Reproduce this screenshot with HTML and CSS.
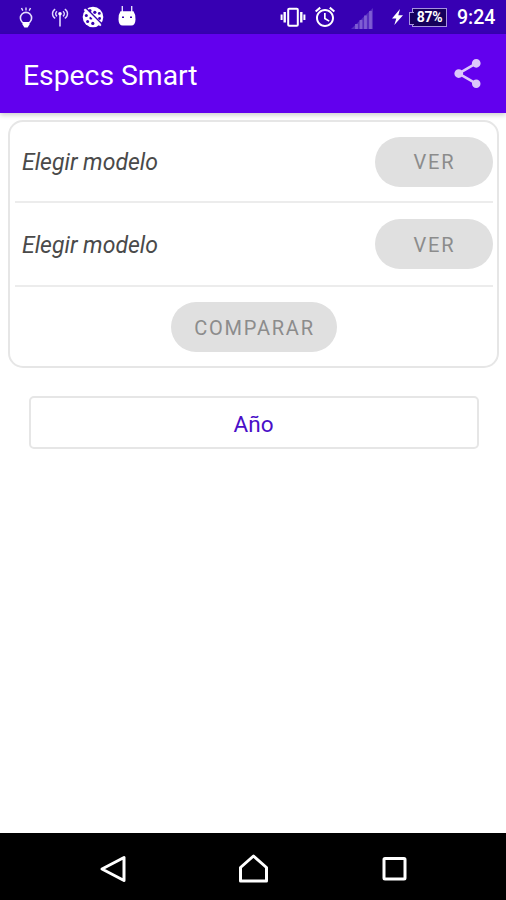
FILE: index.html
```html
<!DOCTYPE html>
<html lang="es">
<head>
    <meta charset="UTF-8">
    <meta name="viewport" content="width=device-width, initial-scale=1.0">
    <title>Especs Smart</title>
    <link rel="stylesheet" href="styles.css">
</head>
<body>
    <div class="status-bar">
        <div class="notifications">
            <svg width="22" height="22" viewBox="0 0 22 22" fill="none" stroke="#e6deff" stroke-width="1.6">
                <circle cx="11" cy="12" r="5.6"/>
                <path d="M11 1.500v3M6.500 2l1.300 2.600M15.500 2l-1.300 2.600" stroke-width="1.400"/>
                <path d="M7.500 16h7v2.600l-1.900 2.900H9.400l-1.900-2.900z" fill="#fff" stroke="none"/>
            </svg>
            <svg width="22" height="22" viewBox="0 0 22 22" fill="none" stroke="#e0d7ff" stroke-width="1.4">
                <path d="M11 8v12.500" stroke-width="1.600"/>
                <path d="M6.200 3.200C2.600 5.400 2.600 10.200 6.200 12.400M15.800 3.200c3.600 2.200 3.600 7 0 9.200"/>
                <path d="M8 5.200c-1.800 1.500-1.800 3.700 0 5.200M14 5.200c1.800 1.500 1.800 3.700 0 5.200"/>
                <circle cx="11" cy="7.800" r="1.800" fill="#fff" stroke="none"/>
            </svg>
            <svg width="22" height="22" viewBox="0 0 22 22">
                <circle cx="11" cy="11" r="10.300" fill="#fff"/>
                <g fill="#3700b3">
                    <circle cx="8" cy="4.600" r="1.500"/>
                    <circle cx="12.800" cy="6.300" r="1.600"/>
                    <circle cx="17.300" cy="7.400" r="1.400"/>
                    <circle cx="4.300" cy="9.600" r="1.500"/>
                    <circle cx="9" cy="12" r="1.600"/>
                    <circle cx="5.600" cy="15.400" r="1.500"/>
                    <circle cx="10.800" cy="17.400" r="1.600"/>
                    <circle cx="17.600" cy="12.500" r="1.400"/>
                </g>
                <path d="M4 2l16 16" stroke="#3700b3" stroke-width="1.500"/>
                <path d="M2.400 3.200l16.400 16.400" stroke="#fff" stroke-width="2"/>
            </svg>
            <svg width="22" height="22" viewBox="0 0 22 22">
                <path d="M6.300 0v7M15.700 0v7" stroke="#e6deff" stroke-width="1.400"/>
                <path d="M4.500 5.300h13q2.200 3 2 8.200-.2 6-4.200 6H6.700q-4 0-4.200-6-.2-5.200 2-8.200z" fill="#fff"/>
                <path d="M6 11.200h2M14 11.200h2" stroke="#3700b3" stroke-width="1.500"/>
            </svg>
        </div>
        <div class="system">
            <svg width="26" height="22" viewBox="0 0 26 22" fill="none" stroke="#fff">
                <rect x="8.200" y="2.700" width="9.600" height="17.100" rx="1" stroke-width="2"/>
                <path d="M4.700 6v10.500M21.300 6v10.500" stroke-width="2.400"/>
                <path d="M1.600 8.500v5.500M24.400 8.500v5.500" stroke-width="2"/>
            </svg>
            <svg class="alarm" width="24" height="24" viewBox="0 0 24 24" fill="#fff">
                <path d="M22 5.720l-4.600-3.860-1.290 1.530 4.600 3.860L22 5.720zM7.880 3.390L6.600 1.860 2 5.710l1.290 1.530 4.590-3.850zM12.700 8H11v6l4.750 2.850.9-1.400-3.950-2.400V8zM12 4c-4.970 0-9 4.030-9 9s4.020 9 9 9 9-4.030 9-9-4.030-9-9-9zm0 16c-3.870 0-7-3.130-7-7s3.130-7 7-7 7 3.130 7 7-3.130 7-7 7z"/>
            </svg>
            <svg class="signal" width="22" height="22" viewBox="0 0 22 22">
                <path d="M0 21L22 0v21z" fill="#562bc0"/>
                <path d="M5.500 16v5M10 12v9M14.500 7.500v13.500M19.500 3v18" stroke="#7f5dd3" stroke-width="2.800"/>
            </svg>
            <svg class="bolt" width="13" height="18" viewBox="0 0 13 18">
                <path d="M9 1L1 10.500h4.300L3.300 17 12 7.300H7.300z" fill="#fff"/>
            </svg>
            <div class="battery">87%</div>
            <div class="clock">9:24</div>
        </div>
    </div>

    <header>
        <h1>Especs Smart</h1>
        <svg width="35" height="35" viewBox="0 0 24 24" fill="#dcc7fb">
            <path d="M18 16.080c-.76 0-1.440.3-1.960.77L8.910 12.700c.05-.23.09-.46.09-.7s-.04-.47-.09-.7l7.050-4.110c.54.5 1.250.81 2.040.81 1.660 0 3-1.340 3-3s-1.340-3-3-3-3 1.340-3 3c0 .24.040.47.090.7L8.040 9.810C7.500 9.310 6.790 9 6 9c-1.660 0-3 1.340-3 3s1.340 3 3 3c.79 0 1.500-.31 2.040-.81l7.120 4.160c-.05.21-.08.43-.08.65 0 1.610 1.310 2.920 2.920 2.920s2.920-1.310 2.920-2.920-1.310-2.920-2.920-2.920z"/>
        </svg>
    </header>

    <main>
        <div class="card">
            <div class="row">
                <span class="model">Elegir modelo</span>
                <button class="btn" disabled>VER</button>
            </div>
            <div class="row">
                <span class="model">Elegir modelo</span>
                <button class="btn" disabled>VER</button>
            </div>
            <div class="row compare">
                <button class="btn btn-wide" disabled>COMPARAR</button>
            </div>
        </div>
        <button class="year">Año</button>
    </main>

    <nav>
        <svg width="30" height="30" viewBox="0 0 30 30">
            <path d="M26 3.500v23L4 15z"/>
        </svg>
        <svg width="30" height="30" viewBox="0 0 30 30">
            <path d="M2.500 27V13.500L15.500 2l13 11.500V27z"/>
        </svg>
        <svg width="30" height="30" viewBox="0 0 30 30">
            <rect x="5" y="4.500" width="21" height="20.500" rx="1"/>
        </svg>
    </nav>
</body>
</html>
```
FILE: styles.css
```css
* {
    box-sizing: border-box;
}
body {
    display: flex;
    flex-direction: column;
    height: 900px;
    margin: 0;
    font-family: Roboto, "Liberation Sans", sans-serif;
    background-color: #fff;
    overflow: hidden;
}
svg {
    display: block;
    flex: none;
}
.status-bar {
    display: flex;
    justify-content: space-between;
    height: 34px;
    padding: 0 10px 0 15px;
    background-color: #3700b3;
    color: #fff;
}
.notifications {
    display: flex;
    align-items: center;
    gap: 11.7px;
}
.system {
    display: flex;
    align-items: center;
}
.alarm {
    margin-left: 7px;
}
.signal {
    margin: 3px 0 0 14px;
}
.bolt {
    margin-left: 18px;
}
.battery {
    position: relative;
    width: 35px;
    height: 19px;
    margin: 0 10px 0 8px;
    border: 1.5px solid #a794df;
    background-color: #16005c;
    font-size: 14px;
    font-weight: 700;
    line-height: 17px;
    text-align: center;
    letter-spacing: -0.3px;
}
/* battery terminal */
.battery::before {
    content: "";
    position: absolute;
    top: 3px;
    left: -4px;
    width: 4px;
    height: 11px;
    border: 1px solid #a794df;
    border-right: none;
    background-color: #16005c;
}
.clock {
    width: 39px;
    padding-top: 2px;
    font-size: 19.5px;
    font-weight: 500;
    line-height: 36px;
    white-space: nowrap;
}
header {
    display: flex;
    justify-content: space-between;
    align-items: center;
    height: 79px;
    padding: 0 21px 0 23px;
    background-color: #6200ee;
    color: #fff;
    box-shadow: 0 2px 5px rgba(0, 0, 0, 0.2);
}
header h1 {
    margin: 4px 0 0;
    font-size: 28.3px;
    font-weight: 400;
}
main {
    flex: 1;
    padding: 7px 7px 0 8px;
}
.card {
    height: 248px;
    padding: 0 4px 0 5px;
    border: 2px solid #e6e6e6;
    border-radius: 15px;
    background-color: #fff;
}
.row {
    display: flex;
    justify-content: space-between;
    align-items: center;
    height: 84px;
    padding-left: 7px;
    border-bottom: 2px solid #ececec;
}
.row:first-child {
    height: 81px;
}
.row.compare {
    justify-content: center;
    height: 80px;
    padding: 0;
    border: none;
}
.model {
    padding-top: 2px;
    color: #4a4a4a;
    font-size: 23px;
    font-style: italic;
}
.btn {
    width: 118px;
    height: 50px;
    padding: 1px 0 0 1px;
    border: none;
    border-radius: 25px;
    background-color: #e0e0e0;
    color: #8c8c8c;
    font-family: inherit;
    font-size: 20px;
    letter-spacing: 1.8px;
}
.btn-wide {
    width: 166px;
}
.year {
    display: block;
    width: 450px;
    height: 53px;
    margin: 28px 0 0 21px;
    padding: 2px 1px 0 0;
    border: 2px solid #e6e6e6;
    border-radius: 5px;
    background-color: #fff;
    color: #4a0fc8;
    font-family: inherit;
    font-size: 22.5px;
}
nav {
    display: flex;
    justify-content: center;
    align-items: center;
    gap: 110.5px;
    height: 67px;
    padding-top: 5px;
    background-color: #000;
}
nav svg {
    fill: none;
    stroke: #fff;
    stroke-width: 3;
    stroke-linejoin: round;
}
```
